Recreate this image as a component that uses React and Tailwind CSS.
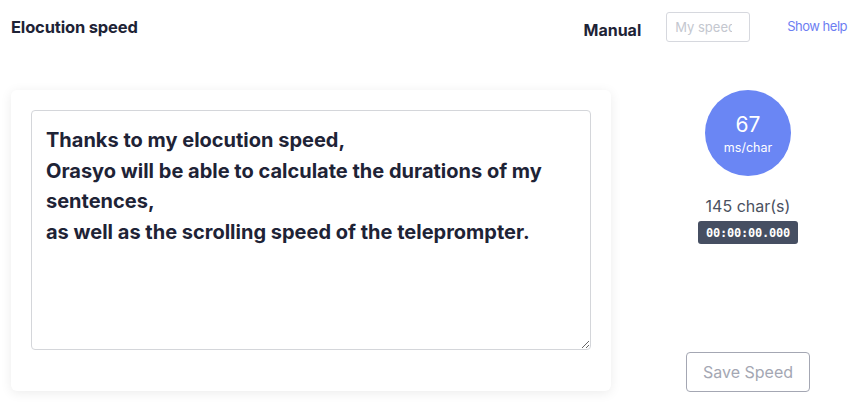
import React, { useState } from 'react';

const SAMPLE = `Thanks to my elocution speed,
Orasyo will be able to calculate the durations of my sentences,
as well as the scrolling speed of the teleprompter.`;

const App = () => {
  const [text, setText] = useState(SAMPLE);
  const [speed, setSpeed] = useState('');

  return (
    <div className="w-[851px] h-[404px] bg-white overflow-hidden font-['Inter',sans-serif] text-[#1e2336]">
      {/* Header */}
      <div className="flex items-start h-[90px]">
        <h1 className="pl-[11px] pt-[17px] text-[16.5px] font-bold leading-5 tracking-[-0.01em]">Elocution speed</h1>
        <div className="ml-auto flex items-start">
          <span className="mt-[20px] mr-[25px] text-[16px] font-bold leading-5">Manual</span>
          <input
            value={speed}
            onChange={(e) => setSpeed(e.target.value)}
            placeholder="My speed"
            className="mt-[12px] w-[84px] h-[30px] pl-[8px] pr-[17px] border border-[#d6d8de] rounded-[3px] text-[13px] placeholder:text-[#c4c7cf] outline-none"
          />
          <a href="#" className="mt-[16px] ml-[37px] mr-[4px] text-[13px] tracking-[-0.5px] leading-5 text-[#6d7ef2]">Show help</a>
        </div>
      </div>

      <div className="flex">
        {/* Card */}
        <div className="ml-[11px] w-[600px] h-[301px] bg-white rounded-[6px] shadow-[0_2px_12px_rgba(0,0,0,0.08)] pt-[20px] px-[20px]">
          <textarea
            value={text}
            onChange={(e) => setText(e.target.value)}
            className="block w-[560px] h-[240px] border border-[#d4d6da] rounded-[4px] pt-[14px] pl-[14px] pr-[15px] text-[20px] font-bold leading-[30.5px] text-[#1e2336] outline-none resize-y"
          />
        </div>

        {/* Right column */}
        <div className="flex-1 flex flex-col items-center pl-[34px] h-[302px]">
          <div className="w-[86px] h-[86px] rounded-full bg-[#6a86f4] flex flex-col items-center justify-center text-white">
            <span className="text-[21px] leading-6 mt-[3px]">67</span>
            <span className="text-[12.5px] leading-4 mt-[3px]">ms/char</span>
          </div>
          <span className="mt-[20px] text-[16px] leading-5 text-[#4b5160]">145 char(s)</span>
          <span className="mt-[5px] px-[8px] h-[23px] flex items-center rounded-[3px] bg-[#464f62] text-white text-[12px] font-bold font-['DejaVu_Sans_Mono',monospace] tracking-[-0.02em]">00:00:00.000</span>
          <button className="mt-auto w-[124px] h-[40px] border border-[#a4a7b3] rounded-[4px] text-[16px] text-[#a4a7b3]">Save Speed</button>
        </div>
      </div>
    </div>
  );
};

export default App;
